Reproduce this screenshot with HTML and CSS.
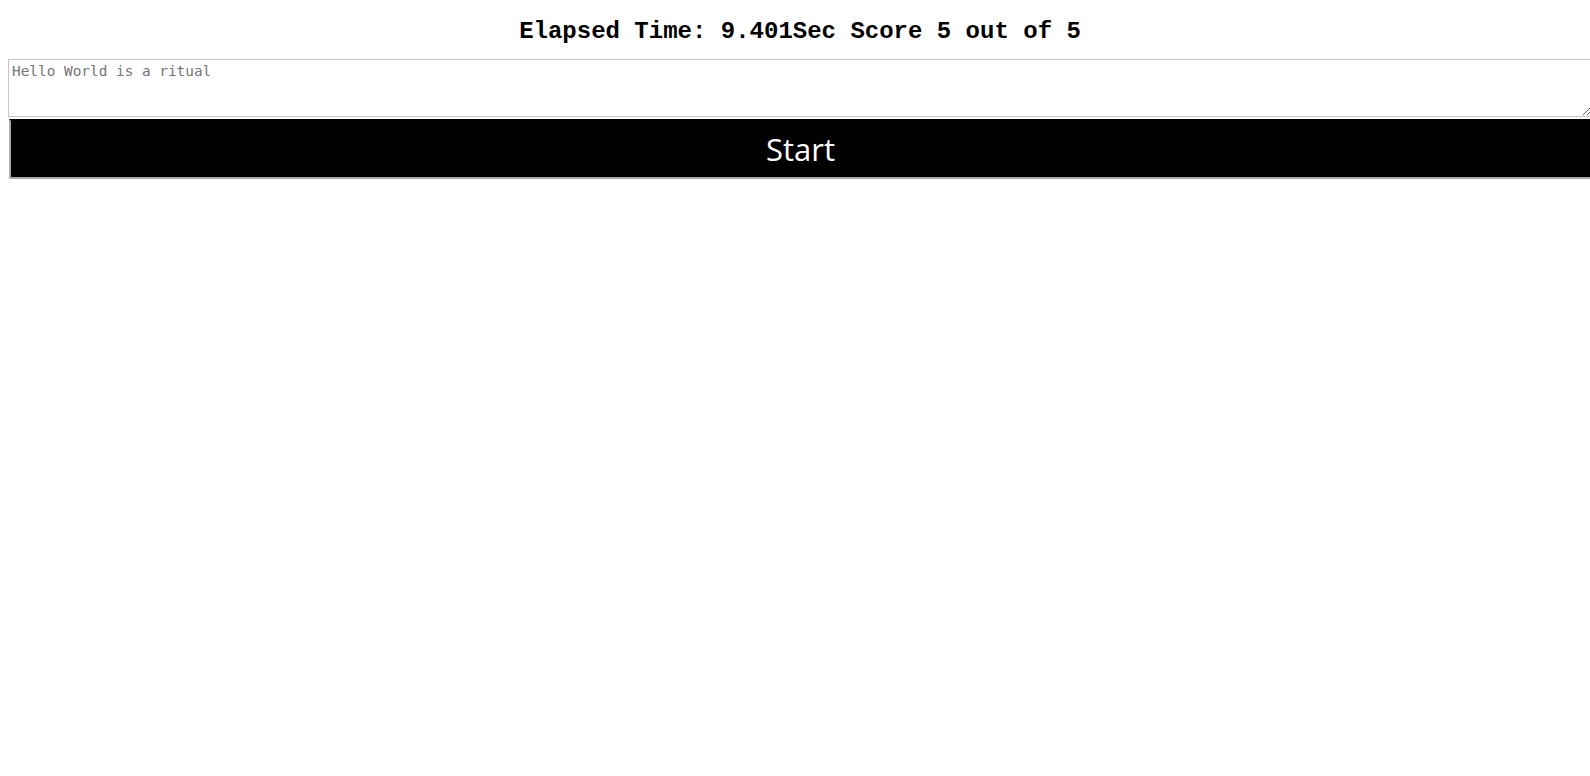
FILE: index.html
```html
<!DOCTYPE html>
<html>
<head>
<meta charset="utf-8">
<link rel="stylesheet" href="styles.css">
</head>
<body>
<div class="wrap">
  <h1 class="status">Elapsed Time: 9.401Sec Score 5 out of 5</h1>
  <textarea class="input" placeholder="Hello World is a ritual"></textarea>
  <button class="start">Start</button>
</div>
</body>
</html>
```

FILE: styles.css
```css
html, body {
  margin: 0;
  background: #fff;
  overflow: hidden;
}
body {
  padding: 0 8px;
}
.wrap {
  width: calc(100% + 10px);
  display: flex;
  flex-direction: column;
}
.status {
  font-family: "Liberation Mono", monospace;
  font-weight: bold;
  font-size: 24px;
  text-align: center;
  margin: 18px 0 14px;
  line-height: 27px;
  color: #000;
}
.input {
  box-sizing: border-box;
  width: 100%;
  height: 58px;
  margin: 0;
  padding: 3px 3px;
  border: 1px solid #c4c4c4;
  font-family: "DejaVu Sans Mono", monospace;
  font-size: 14.4px;
  display: block;
}
.input::placeholder {
  color: #757575;
}
.start {
  box-sizing: border-box;
  width: calc(100% - 1px);
  margin: 2px 0 0 1px;
  height: 60px;
  background: #000;
  color: #fff;
  border: 2px solid #000;
  border-bottom-color: #a9a9a9;
  border-left-color: #a9a9a9;
  font-family: "Open Sans", sans-serif;
  font-size: 31px;
  padding: 0;
}
```
